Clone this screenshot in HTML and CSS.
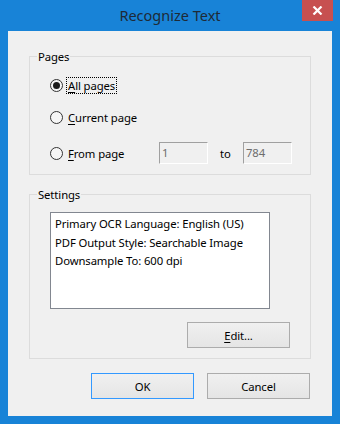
FILE: index.html
```html
<!DOCTYPE html>
<html lang="en">
<head>
    <meta charset="UTF-8">
    <meta name="viewport" content="width=device-width, initial-scale=1.0">
    <title>Recognize Text</title>
    <link rel="stylesheet" href="styles.css">
</head>
<body>

<div class="window">
    <!-- Title Bar -->
    <div class="titlebar">
        <span class="title">Recognize Text</span>
        <span class="close-btn">
            <svg width="11" height="9" viewBox="0 0 11 9">
                <path d="M1.5 0.5 L9.5 8.5 M9.5 0.5 L1.5 8.5" stroke="#fff" stroke-width="2.2" fill="none"/>
            </svg>
        </span>
    </div>

    <div class="client">
        <!-- Pages -->
        <fieldset class="group pages">
            <legend>Pages</legend>
            <label class="radio-row first">
                <span class="radio checked"></span>
                <span class="radio-text focused"><u>A</u>ll pages</span>
            </label>
            <label class="radio-row second">
                <span class="radio"></span>
                <span class="radio-text"><u>C</u>urrent page</span>
            </label>
            <div class="range-row">
                <label class="range-label">
                    <span class="radio"></span>
                    <span class="radio-text"><u>F</u>rom page</span>
                </label>
                <span class="textbox">1</span>
                <span class="range-to">to</span>
                <span class="textbox">784</span>
            </div>
        </fieldset>

        <!-- Settings -->
        <fieldset class="group settings">
            <legend>Settings</legend>
            <div class="listbox">
                <div>Primary OCR Language: English (US)</div>
                <div>PDF Output Style: Searchable Image</div>
                <div>Downsample To: 600 dpi</div>
            </div>
            <div class="edit-row">
                <button class="btn"><u>E</u>dit...</button>
            </div>
        </fieldset>

        <div class="dialog-buttons">
            <button class="btn default">OK</button>
            <button class="btn">Cancel</button>
        </div>
    </div>
</div>

</body>
</html>
```

FILE: styles.css
```css
body {
    margin: 0;
    font-family: "Noto Sans", "Open Sans", sans-serif;
    font-size: 11.3px;
    letter-spacing: -0.1px;
    color: #000;
}

/* Window frame */
.window {
    width: 340px;
    height: 424px;
    background-color: #1883d7;
    display: flex;
    flex-direction: column;
}

.titlebar {
    height: 31px;
    position: relative;
    display: flex;
    justify-content: center;
}

.title {
    font-size: 14.5px;
    letter-spacing: 0;
    line-height: 31px;
    color: #1e2a36;
}

.close-btn {
    position: absolute;
    top: 0;
    right: 7px;
    width: 31px;
    height: 21px;
    background-color: #c75050;
    display: flex;
    align-items: center;
    justify-content: center;
}

.client {
    margin: 0 8px;
    height: 385px;
    background-color: #f0f0f0;
    padding-top: 18px;
    box-sizing: border-box;
}

/* Group boxes */
.group {
    margin: 0 21px;
    padding: 0 0 0 20px;
    border: 1px solid #dcdcdc;
    min-width: 0;
}

.group legend {
    padding: 0 1px;
    line-height: 15px;
    margin-left: -13px;
}

.group.pages {
    padding-bottom: 10px;
}

.group.settings {
    margin-top: 12px;
    padding-bottom: 10px;
}

/* Radio buttons */
.radio-row,
.range-label {
    display: flex;
    align-items: center;
    height: 18px;
}

.radio-row.first {
    margin-top: 12px;
}

.radio-row.second {
    margin-top: 14px;
}

.radio {
    width: 11px;
    height: 11px;
    border: 1px solid #333;
    border-radius: 50%;
    background-color: #f6f6f6;
    position: relative;
    flex-shrink: 0;
}

.radio.checked::after {
    content: "";
    position: absolute;
    left: 2px;
    top: 2px;
    width: 7px;
    height: 7px;
    border-radius: 50%;
    background-color: #1c1c1c;
}

.radio-text {
    margin-left: 3px;
    line-height: 15px;
    padding: 0 1px;
    border: 1px dotted transparent;
}

.radio-text.focused {
    border-color: #000;
}

u {
    text-underline-offset: 2px;
}

.range-row {
    display: flex;
    align-items: center;
    margin-top: 16px;
    height: 22px;
}

.range-label {
    width: 109px;
}

.textbox {
    width: 45px;
    height: 20px;
    line-height: 20px;
    padding-left: 2px;
    border: 1px solid #fff;
    border-top-color: #a0a0a0;
    border-left-color: #a0a0a0;
    color: #6d6d6d;
    background-color: #f0f0f0;
}

.range-to {
    margin: 0 12px;
    width: 11px;
}

/* Settings list */
.listbox {
    margin-top: 10px;
    border: 1px solid #828790;
    background-color: #fff;
    padding: 2px 0 0 4px;
    width: 214px;
    height: 93px;
    line-height: 18.5px;
}

.edit-row {
    display: flex;
    justify-content: flex-end;
    margin-top: 13px;
    padding-right: 20px;
}

/* Buttons */
.btn {
    width: 103px;
    height: 26px;
    font-family: inherit;
    font-size: 11.3px;
    letter-spacing: -0.1px;
    color: #000;
    border: 1px solid #acacac;
    background: linear-gradient(#f0f0f0, #e5e5e5);
    padding: 0;
}

.btn.default {
    border-color: #3399ff;
}

.dialog-buttons {
    display: flex;
    justify-content: flex-end;
    gap: 13px;
    margin: 14px 22px 0 0;
}
```
